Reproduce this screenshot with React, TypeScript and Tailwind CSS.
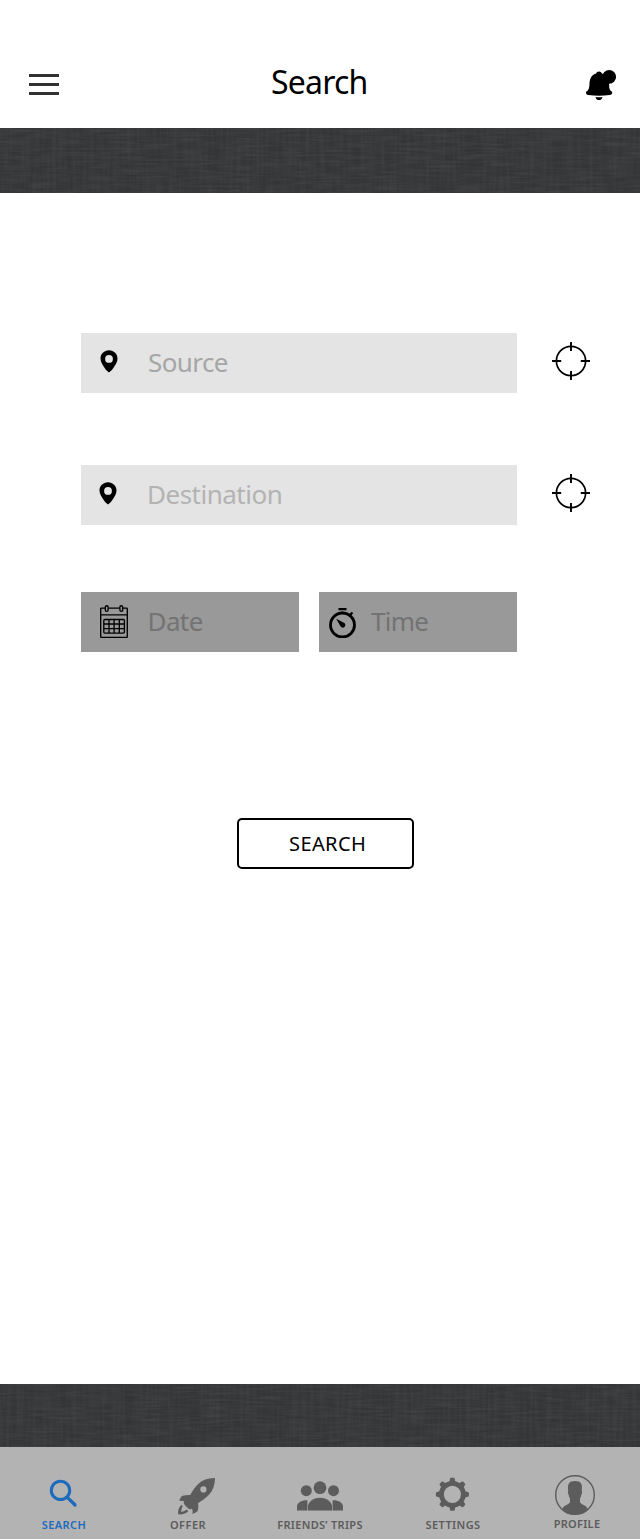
import type { ReactNode } from "react";

function FabricBand({ className, seed }: { className: string; seed: number }) {
  const across = `weave-across-${seed}`;
  const down = `weave-down-${seed}`;
  return (
    <div className={`relative shrink-0 overflow-hidden bg-[#343537] ${className}`}>
      <svg className="absolute inset-0 h-full w-full opacity-20" aria-hidden="true">
        <filter id={across} x="0" y="0" width="100%" height="100%">
          <feTurbulence type="fractalNoise" baseFrequency="0.035 0.45" numOctaves="2" seed={seed} />
          <feColorMatrix values="0 0 0 0 0.4  0 0 0 0 0.43  0 0 0 0 0.45  0.9 0 0 0 -0.32" />
        </filter>
        <filter id={down} x="0" y="0" width="100%" height="100%">
          <feTurbulence type="fractalNoise" baseFrequency="0.3 0.02" numOctaves="2" seed={seed + 4} />
          <feColorMatrix values="0 0 0 0 0.4  0 0 0 0 0.43  0 0 0 0 0.45  0.6 0 0 0 -0.22" />
        </filter>
        <rect width="100%" height="100%" filter={`url(#${across})`} />
        <rect width="100%" height="100%" filter={`url(#${down})`} />
      </svg>
    </div>
  );
}

function BellIcon() {
  return (
    <svg width="34" height="34" viewBox="0 0 34 34" aria-hidden="true">
      <path d="M12.200 5.600c.3-1.300 1.300-2.200 2.800-2.200s2.500.9 2.800 2.200c4.600 1.300 7.300 4.400 7.300 9.900 0 3.500.2 6 1.500 7.200 1 .5 1.600 1.100 1.600 2.100 0 1.300-.9 2-2.500 2.200-7.100.9-14.300.9-21.400 0C2.700 26.800 2 26.100 2 24.800c0-1 .6-1.600 1.600-2.100 1.300-1.400 1.700-3.700 1.900-7.200.3-5.500 2.400-8.700 6.700-9.900Z" />
      <path d="M11.500 29c2.300.4 4.700.4 7 0-.3 2-1.600 3.100-3.500 3.100S11.800 31 11.500 29Z" />
      <circle cx="25.200" cy="8.800" r="6.900" />
    </svg>
  );
}

function PinIcon() {
  return (
    <svg width="18" height="23" viewBox="0 0 18 23" aria-hidden="true">
      <path
        fillRule="evenodd"
        d="M9 .2C4.200.2.500 3.800.500 8.500c0 3.300 2 6.400 4 9.300 1.300 2 2.900 3.600 4.500 4.600 1.600-1 3.200-2.600 4.500-4.600 2-2.900 4-6 4-9.300C17.500 3.800 13.800.200 9 .200Zm0 4.800a3.900 3.900 0 1 1 0 7.800A3.900 3.900 0 0 1 9 5Z"
      />
    </svg>
  );
}

function CrosshairIcon() {
  return (
    <svg width="38" height="38" viewBox="0 0 38 38" fill="none" stroke="#000" aria-hidden="true">
      <circle cx="19" cy="19" r="14.600" strokeWidth="1.700" />
      <path d="M19 0v9M19 29v9M0 19h9.200M28.800 19H38" strokeWidth="1.900" />
    </svg>
  );
}

function CalendarIcon() {
  return (
    <svg width="28" height="34" viewBox="0 0 28 34" fill="none" stroke="#000" strokeWidth="1.350" aria-hidden="true">
      <path d="M5 3.100H1.300a.6.6 0 0 0-.6.600v28a.6.6 0 0 0 .6.600h25.400a.6.6 0 0 0 .6-.600v-28a.6.6 0 0 0-.6-.600H23M8.500 3.100h11M.7 9.800h26.600" />
      <rect x="5.300" y=".7" width="2.800" height="5.600" rx="1.400" />
      <rect x="19.900" y=".7" width="2.800" height="5.600" rx="1.400" />
      <rect x="3.800" y="14.500" width="20.600" height="13.600" rx="1" />
      <path d="M3.800 19h20.600M3.800 23.600h20.600M9 14.500v13.600M14.100 14.500v13.600M19.300 14.500v13.600" />
    </svg>
  );
}

function StopwatchIcon() {
  return (
    <svg width="28" height="32" viewBox="0 0 28 32" aria-hidden="true">
      <circle cx="13.500" cy="19" r="12" fill="none" stroke="#000" strokeWidth="2.800" />
      <path d="M9.500 2h8v2.300h-8zM12.200 6c.8-.8 1.800-.8 2.600 0v2h-2.600zM20.300 8l2.500-2.200 1.400 1.400-2.300 2.500Z" />
      <path d="M7.200 12.700 14.300 16.500a2.600 2.600 0 1 1-3 3.500Z" />
    </svg>
  );
}

function TabGlyph({ children }: { children: ReactNode }) {
  return (
    <svg width="52" height="42" viewBox="0 0 52 42" fill="currentColor" className="shrink-0 overflow-visible" aria-hidden="true">
      {children}
    </svg>
  );
}

const TEETH = [0, 45, 90, 135, 180, 225, 270, 315];

const searchGlyph = (
  <g fill="none" stroke="currentColor">
    <circle cx="22.500" cy="15.400" r="9.200" strokeWidth="3" />
    <path d="m29.300 22.300 7.800 7.700" strokeWidth="3.300" />
    <path d="m36.500 29.500.5.5" strokeWidth="3.300" strokeLinecap="round" />
  </g>
);

const rocketGlyph = (
  <>
    <path
      fillRule="evenodd"
      d="M52 3C45 2.800 39.500 5 35.500 8.700 32 12 29.500 15.800 27.200 20c-2.700-.2-5.700.3-8.500 1-.8 1.500-2 3-2.500 4.700 1.800-.2 3.600 0 5.200.7-.5 1-.8 1.700-.4 2.500 1.700 2.200 3.500 3.900 5.600 5.300.9.300 1.600 0 2.400-.5.700 1.700.8 3.500.5 5.400 1.800-.7 3.600-1.700 5.200-3 .7-2.700.9-5.200.3-7.800 4-2.400 8-5.200 11.200-8.700C50 15.500 52 9.700 52 3ZM40.400 11.300a3.100 3.100 0 1 1 0 6.200 3.100 3.100 0 0 1 0-6.200Z"
    />
    <path
      fillRule="evenodd"
      d="M18.300 29.800c-2.300 2.300-3.500 5.500-3.200 9.500 4.200.5 8-.7 10.300-3.400l-1.700-1.300c-1.300 1.200-3 2-5.400 2.500-.2-2.200.4-4.200 1.500-5.900Z"
    />
  </>
);

const friendsGlyph = (
  <>
    <circle cx="11.300" cy="15.700" r="5.500" />
    <circle cx="25" cy="12.700" r="6.400" />
    <circle cx="38.500" cy="15.700" r="5.500" />
    <path d="M2 35.500v-3.800c0-4 4.500-6.600 10.400-6.400v10.200ZM13 35.500v-5c1.500-5 6-7.800 12-7.800s10.500 2.800 12 7.800v5ZM37.600 35.500V25.300C43.500 25.100 48 27.700 48 31.700v3.800Z" />
  </>
);

const gearGlyph = (
  <g>
    <circle cx="25.400" cy="19.300" r="11" fill="none" stroke="currentColor" strokeWidth="4.800" />
    {TEETH.map((angle) => (
      <path
        key={angle}
        transform={`rotate(${angle} 25.400 19.300)`}
        d="M20.800 8.200c1.500-.8 1.900-1.700 2-3.300.1-1.500.6-2.100 1.500-2.100h2.200c.9 0 1.400.6 1.500 2.100.1 1.600.5 2.500 2 3.300Z"
      />
    ))}
  </g>
);

const profileGlyph = (
  <>
    <circle cx="24" cy="20" r="19.300" fill="none" stroke="currentColor" strokeWidth="1.400" />
    <path d="M17.300 16C16.200 9 18 5.900 24 5.900S31.800 9 30.700 16c.6.300.6 2.500-.4 3.800-.3 1.700-.7 2.800-1.300 3.700v3.600c.3 1.200 1.500 2 3.500 2.800 2.400.9 3.500 2 4.600 4.700C33.800 38 29.500 39.800 24 39.800S14.200 38 10.900 34.600c1.100-2.700 2.200-3.800 4.600-4.700 2-.8 3.200-1.600 3.500-2.800v-3.600c-.6-.9-1-2-1.300-3.700-1-1.300-1-3.500-.4-3.800Z" />
  </>
);

const tabs = [
  { label: "SEARCH", glyph: searchGlyph, cell: "w-32 text-[#1d6bbd]", text: "tracking-[0.4px]" },
  { label: "OFFER", glyph: rocketGlyph, cell: "w-[122px]", text: "tracking-[0.5px] -translate-x-px" },
  { label: "FRIENDS’ TRIPS", glyph: friendsGlyph, cell: "w-[142px]", text: "tracking-[0.3px] -translate-x-px" },
  { label: "SETTINGS", glyph: gearGlyph, cell: "w-[122px]", text: "tracking-[0.4px]" },
  { label: "PROFILE", glyph: profileGlyph, cell: "w-[126px]", text: "-mt-px tracking-[0.3px]" },
];

function LocationRow({ label, iconClass, textClass }: { label: string; iconClass: string; textClass: string }) {
  return (
    <div className="flex h-[60px] items-center">
      <div className="flex h-full w-[436px] items-center bg-[#e4e4e4]">
        <span className={`mb-1 ${iconClass}`}>
          <PinIcon />
        </span>
        <span className={`mb-0.5 text-[26px] leading-none ${textClass}`}>{label}</span>
      </div>
      <button className="mb-1 ml-[35px]" aria-label={`Use current location for ${label}`}>
        <CrosshairIcon />
      </button>
    </div>
  );
}

export default function App() {
  return (
    <div className="flex h-[1539px] w-[640px] flex-col bg-white font-['Noto_Sans',sans-serif] text-black">
      <header className="flex h-32 shrink-0 items-start pl-[29px]">
        <button className="mt-[74px] flex w-[30px] flex-col gap-1.5" aria-label="Menu">
          <span className="h-[3px] bg-[#333132]" />
          <span className="h-[3px] bg-[#333132]" />
          <span className="h-[3px] bg-[#333132]" />
        </button>
        <h1 className="mt-[62px] ml-[212px] w-[109px] text-[32px] leading-10 tracking-[-0.8px]">Search</h1>
        <button className="mt-[68px] ml-[204px]" aria-label="Notifications">
          <BellIcon />
        </button>
      </header>

      <FabricBand className="h-[65px]" seed={3} />

      <main className="flex grow flex-col pt-[140px] pl-[81px]">
        <LocationRow label="Source" iconClass="ml-[19px]" textClass="ml-[30px] tracking-[-0.6px] text-[#a6a6a6]" />
        <div className="h-[72px]" />
        <LocationRow label="Destination" iconClass="ml-[18px]" textClass="ml-[30px] tracking-[-0.5px] text-[#b3b3b3]" />
        <div className="mt-[67px] flex h-[60px] gap-5">
          <button className="flex w-[218px] items-center bg-[#999] pl-[19px]">
            <CalendarIcon />
            <span className="mb-0.5 ml-[19.500px] text-[26px] leading-none tracking-[-0.6px] text-[#737373]">Date</span>
          </button>
          <button className="flex w-[198px] items-center bg-[#999] pl-2.5">
            <StopwatchIcon />
            <span className="mb-0.5 ml-[14px] text-[26px] leading-none tracking-[-0.7px] text-[#737373]">Time</span>
          </button>
        </div>
        <button className="mt-[166px] ml-[156px] flex h-[51px] w-[177px] items-center rounded-[5px] border-2 border-black pl-[50px] text-[20px] leading-none tracking-[0.4px]">
          SEARCH
        </button>
      </main>

      <FabricBand className="h-[63px]" seed={8} />

      <nav className="flex h-[92px] shrink-0 bg-[#b3b3b3] pt-7 text-[#5c5c5c]">
        {tabs.map((tab) => (
          <button key={tab.label} className={`flex flex-col items-center ${tab.cell}`}>
            <TabGlyph>{tab.glyph}</TabGlyph>
            <span className={`text-[11px] leading-4 font-semibold whitespace-nowrap ${tab.text}`}>{tab.label}</span>
          </button>
        ))}
      </nav>
    </div>
  );
}
